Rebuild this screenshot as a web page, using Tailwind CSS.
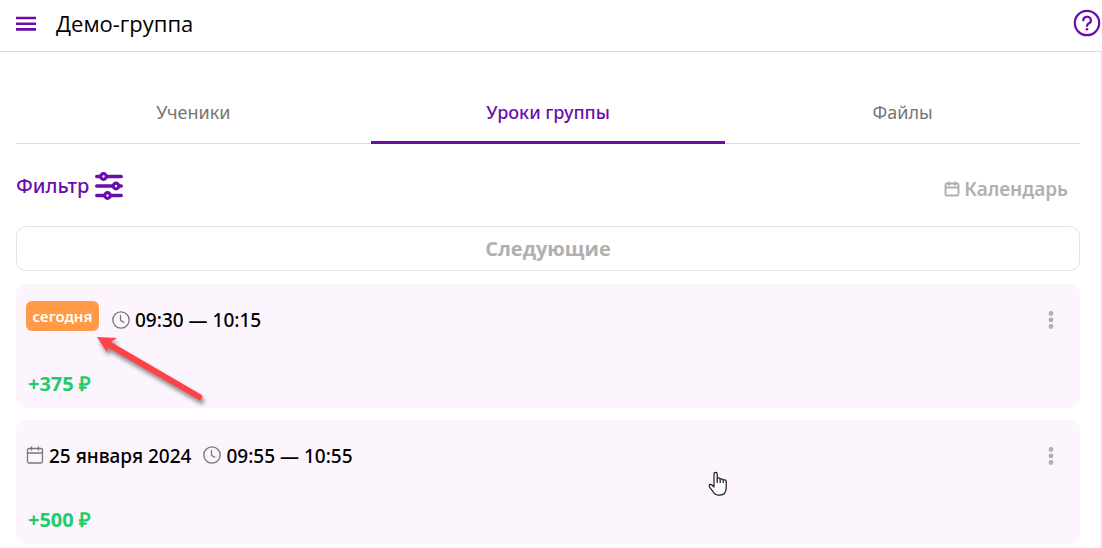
<!DOCTYPE html>
<html lang="ru">
<head>
<meta charset="utf-8">
<title>Демо-группа</title>
<script src="https://cdn.jsdelivr.net/npm/@tailwindcss/browser@4"></script>
</head>
<body class="flex min-h-screen flex-col bg-white font-['Noto_Sans','Open_Sans',sans-serif] text-black">
<svg class="hidden" aria-hidden="true">
  <symbol id="clock" viewBox="0 0 18 18"><g fill="none" stroke="#77777f" stroke-width="1.3" stroke-linecap="round" stroke-linejoin="round"><circle cx="9" cy="9" r="8.2"/><path d="M8.500 4.500v5l3.200 1.600"/></g></symbol>
  <symbol id="dots" viewBox="0 0 6 18"><g fill="#b0b0b0"><circle cx="3" cy="2.500" r="2.400"/><circle cx="3" cy="8.900" r="2.400"/><circle cx="3" cy="15.500" r="2.400"/></g></symbol>
</svg>
<header class="flex h-13 items-center border-b border-[#e0d8e8] pb-1.5 pl-4">
  <button type="button" aria-label="Меню" class="mr-5 shrink-0">
    <svg class="block h-4 w-5" viewBox="0 0 20 16"><path d="M0 3h20M0 8.700h20M0 14.400h20" stroke="#6a0dad" stroke-width="2.600"/></svg>
  </button>
  <h1 class="grow font-['Open_Sans',sans-serif] text-[22px]/7 font-medium">Демо-группа</h1>
  <button type="button" aria-label="Помощь" class="mr-px shrink-0">
    <svg class="block size-7" viewBox="0 0 28 28" fill="none" stroke="#6a0dad" stroke-width="2.200"><circle cx="14" cy="14" r="12.200"/><path d="M10.300 11.300a3.800 3.500 0 1 1 5.700 3q-2 1.100-2 2.600" stroke-linecap="round"/><circle cx="14" cy="20.300" r="1.300" fill="#6a0dad" stroke="none"/></svg>
  </button>
</header>
<main class="grow border-r-2 border-[#f1f1f1] pt-8 pr-5 pl-4">
  <nav class="grid h-15 grid-cols-3 border-b border-[#dcdcdc] text-center text-lg/7">
    <a href="#students" class="-mb-px flex items-center justify-center pb-1 text-[#757575]">Ученики</a>
    <a href="#lessons" aria-current="page" class="-mb-px flex items-center justify-center border-b-3 border-[#6a0dad] pb-px font-medium text-[#6a0dad]">Уроки группы</a>
    <a href="#files" class="-mb-px flex items-center justify-center pb-1 text-[#757575]">Файлы</a>
  </nav>
  <div class="flex h-[82px] items-center justify-between pr-3">
    <button type="button" class="flex items-center gap-1.5 pt-0.5 text-[20px]/7 font-medium text-[#6a0dad]">Фильтр
      <svg class="block h-7 w-7" viewBox="0 0 28 28" fill="none" stroke="#6a0dad" stroke-width="3.600" stroke-linecap="round"><path d="M1.800 4.500h24.400M1.800 14h24.400M1.800 23.500h24.400"/><g fill="#fff" stroke-width="3.200"><circle cx="8.500" cy="4.500" r="2.800"/><circle cx="21" cy="14" r="2.800"/><circle cx="12.500" cy="23.500" r="2.800"/></g></svg>
    </button>
    <button type="button" class="flex items-center gap-1 pt-2 text-[19px]/7 font-semibold text-[#b0b0b0]">
      <svg class="block size-4" viewBox="0 0 16 16" fill="none" stroke="#b0b0b0" stroke-width="1.900"><rect x="1.500" y="2.500" width="13" height="12" rx="1.500"/><path d="M1.500 6.500h13M5 .5v4M11 .5v4"/></svg>Календарь
    </button>
  </div>
  <button type="button" class="block h-[45px] w-full rounded-[10px] border border-[#e2e2e2] font-['Open_Sans',sans-serif] text-[20px]/7 font-bold text-[#b0b0b0]">Следующие</button>
  <ul class="mt-[13px] flex flex-col gap-3">
    <li class="relative h-31 rounded-[10px] bg-[#fcf5fd] px-[10px] pt-4">
      <div class="flex h-10 items-center text-[19px]/7 font-medium">
        <span class="mr-[13px] mb-2 flex h-[30px] w-[73px] items-center justify-center rounded-md bg-[#ff9a46] text-[15px] font-semibold text-white">сегодня</span>
        <svg class="mr-[5px] mb-px size-[18px]"><use href="#clock"/></svg>
        <time class="grow">09:30 — 10:15</time>
        <button type="button" aria-label="Действия" class="mr-4 shrink-0"><svg class="block h-[18px] w-[6px]"><use href="#dots"/></svg></button>
      </div>
      <p class="mt-[30px] pl-[2px] font-['Open_Sans',sans-serif] text-[20px]/7 font-bold text-[#20cc6b]">+375 ₽</p>
      <svg class="absolute top-[48px] left-[76px] h-[78px] w-[122px]" viewBox="0 0 122 78" aria-hidden="true"><g style="filter:drop-shadow(2px 4px 2px rgba(0,0,0,.45))"><path d="M5 5L25 6L19 10L109 62.500A3 3 0 0 1 107 68L15 15L15.500 21Z" fill="#ff4245"/></g></svg>
    </li>
    <li class="relative h-31 rounded-[10px] bg-[#fcf5fd] px-[10px] pt-4">
      <div class="flex h-10 items-center text-[19px]/7 font-medium">
        <svg class="mr-[5px] mb-0.5 size-[18px]" viewBox="0 0 18 18" fill="none" stroke="#77777f" stroke-width="1.300"><rect x="1.500" y="2.500" width="15" height="14.500" rx="1.500"/><path d="M1.500 7h15M5.500.5v4M12.500.5v4"/></svg>
        <time class="mr-3" datetime="2024-01-25">25 января 2024</time>
        <svg class="mr-[5px] mb-0.5 size-[18px]"><use href="#clock"/></svg>
        <time class="grow">09:55 — 10:55</time>
        <button type="button" aria-label="Действия" class="mr-4 shrink-0"><svg class="block h-[18px] w-[6px]"><use href="#dots"/></svg></button>
      </div>
      <p class="mt-[30px] pl-[2px] font-['Open_Sans',sans-serif] text-[20px]/7 font-bold text-[#20cc6b]">+500 ₽</p>
      <svg class="absolute top-[51px] left-[692px] h-[26px] w-[20px]" viewBox="0 0 20 26" fill="#fff" stroke="#171428" stroke-width="1.200" stroke-linejoin="round" aria-hidden="true"><path d="M6 15V3a1.600 1.600 0 0 1 3.200 0v4q2.600-.6 3 1q2.600-.6 3 .9q3-.5 3 1.800v6q0 7-6.500 7.500q-4.500.3-7-4L1.500 16q-.8-2.600 1-2.600q1.700.1 3.500 2.600z"/><path d="M9.200 7v5M12.200 8v4M15.200 9v3" fill="none"/></svg>
    </li>
  </ul>
</main>
</body>
</html>
